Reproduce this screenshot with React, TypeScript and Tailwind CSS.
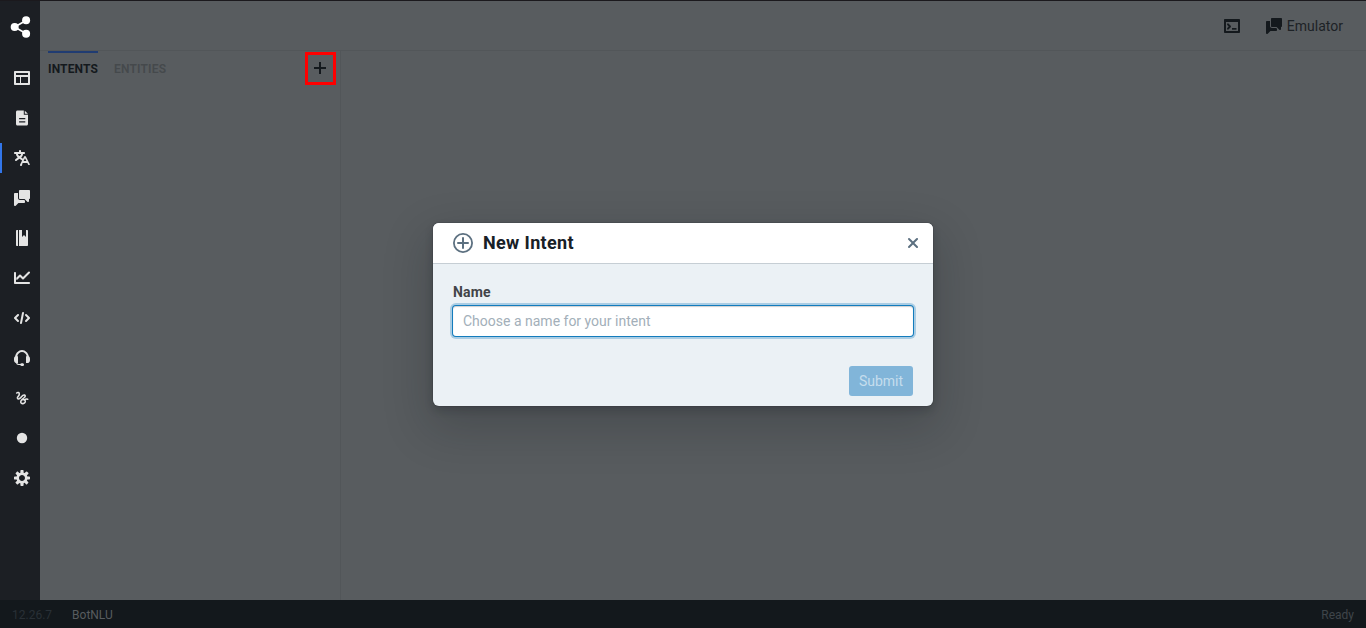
import React from "react";

type IconProps = { size?: number; className?: string; children: React.ReactNode };

function Icon({ size = 16, className = "", children }: IconProps) {
  return (
    <svg width={size} height={size} viewBox="0 0 16 16" fill="currentColor" className={`block shrink-0 ${className}`}>
      {children}
    </svg>
  );
}

const Chat = ({ className = "" }: { className?: string }) => (
  <Icon className={className}>
    <path d="M6 10c-1.1 0-2-.9-2-2V3H1c-.55 0-1 .45-1 1v11a1.003 1.003 0 001.71.71L4.41 13H10c.55 0 1-.45 1-1v-1.17l-.83-.83H6zm9-10H6c-.55 0-1 .45-1 1v7c0 .55.45 1 1 1h4.59l2.71 2.71c.17.18.42.29.7.29.55 0 1-.45 1-1V9c.55 0 1-.45 1-1V1c0-.55-.45-1-1-1z" />
  </Icon>
);

const navItems: { name: string; active?: boolean; icon: React.ReactNode }[] = [
  {
    name: "flows",
    icon: (
      <Icon>
        <path fillRule="evenodd" d="M1 1h14c.55 0 1 .45 1 1v12c0 .55-.45 1-1 1H1c-.55 0-1-.45-1-1V2c0-.55.45-1 1-1zm1 2v2h12V3H2zm0 4v6h4V7H2zm5 0v6h7V7H7z" />
      </Icon>
    ),
  },
  {
    name: "content",
    icon: (
      <Icon>
        <path transform="translate(0.5 0)" fillRule="evenodd" d="M3 .5h6.3v4.2h4.2V14c0 .9-.6 1.5-1.5 1.5H3c-.9 0-1.5-.6-1.5-1.5V2C1.500 1.100 2.100.5 3 .5zM10.300.7l3.100 3.100h-3.100V.7zM4.600 8v1.300h6.200V8H4.600zm0 3.200v1.300h6.200v-1.300H4.600z" />
      </Icon>
    ),
  },
  {
    name: "nlu",
    active: true,
    icon: (
      <Icon>
        <path d="M15.89 14.56l-3.99-8h-.01c-.17-.33-.5-.56-.89-.56s-.72.23-.89.56h-.01L9 8.760 7.170 7.380l.23-.18C8.370 6.470 9 5.310 9 4h1c.55 0 1-.45 1-1s-.45-1-1-1H7V1c0-.55-.45-1-1-1S5 .45 5 1v1H1c-.55 0-1 .45-1 1s.45 1 1 1h6c0 .66-.32 1.250-.82 1.610l-.68.51-.68-.5C4.320 5.250 4 4.660 4 4H2c0 1.310.63 2.470 1.600 3.200l.23.17L1.400 9.200l.01.01C1.170 9.400 1 9.670 1 10c0 .55.45 1 1 1 .23 0 .42-.09.59-.21l.01.01 2.900-2.170 2.600 1.950-1.990 3.980h.01c-.07.13-.12.27-.12.44 0 .55.45 1 1 1 .39 0 .72-.23.89-.56h.01L8.620 13h4.760l.72 1.450h.01c.17.32.5.55.89.55.55 0 1-.45 1-1 0-.16-.05-.31-.11-.44zM9.620 11L11 8.240 12.380 11H9.620z" />
      </Icon>
    ),
  },
  { name: "qna", icon: <Chat /> },
  {
    name: "library",
    icon: (
      <Icon>
        <path d="M2 1v14c0 .55.45 1 1 1h1V0H3c-.55 0-1 .45-1 1zm11-1h-1v7l-2-2-2 2V0H5v16h8c.55 0 1-.45 1-1V1c0-.55-.45-1-1-1z" />
      </Icon>
    ),
  },
  {
    name: "analytics",
    icon: (
      <Icon>
        <path d="M15 12H2V3c0-.55-.45-1-1-1s-1 .45-1 1v10c0 .55.45 1 1 1h14c.55 0 1-.45 1-1s-.45-1-1-1zM3.250 9.660L6 6.910l2.290 2.300a1.003 1.003 0 001.420 0l6-6a1.003 1.003 0 00-1.420-1.420L9 7.090 6.710 4.790a1.003 1.003 0 00-1.420 0L2.250 7.840v1.820h1z" />
      </Icon>
    ),
  },
  {
    name: "code",
    icon: (
      <Icon>
        <path d="M15.710 7.290l-3-3a1.003 1.003 0 00-1.420 1.420L13.590 8l-2.300 2.290a1.003 1.003 0 001.420 1.420l3-3c.18-.18.29-.43.29-.71s-.11-.53-.29-.71zM5 5a1.003 1.003 0 00-1.710-.71l-3 3C.11 7.470 0 7.720 0 8s.11.53.29.71l3 3a1.003 1.003 0 001.420-1.420L2.410 8l2.300-2.290C4.890 5.530 5 5.280 5 5zm4-3c-.48 0-.88.35-.97.81l-2 10c-.02.06-.03.12-.03.19 0 .55.45 1 1 1 .48 0 .88-.35.97-.81l2-10C9.990 3.130 10 3.070 10 3c0-.55-.45-1-1-1z" />
      </Icon>
    ),
  },
  {
    name: "hitl",
    icon: (
      <Icon>
        <path d="M14.850 6.340C14.180 3.010 11.480 0 8 0S1.820 3.010 1.150 6.340C.46 6.850 0 7.870 0 9v1c0 1.660.9 3 2 3h.05C2.300 14.140 3.180 15 4.500 15h1.750c.25.58.82 1 1.500 1h.75C9.330 16 10 15.500 10 14.700s-.67-1.400-1.500-1.400h-.75c-.7 0-1.260.2-1.500.6H4.800c-.75 0-1.230-.35-1.480-.95H4V6.200h-.8C3.800 3.900 5.700 2 8 2s4.200 1.900 4.800 4.200H12V13h2c1.100 0 2-1.340 2-3V9c0-1.130-.46-2.150-1.150-2.660z" />
      </Icon>
    ),
  },
  {
    name: "misunderstood",
    icon: (
      <Icon>
        <path
          d="M2.700 3C3.700 2.100 5.400 2.300 5.300 4.200 5.200 5.800 3.300 6.600 3.400 8c.2 1.400 1.800 1.200 3.300-.4C8.100 6 9.100 4.700 10.400 5.100c2 .8-.1 2.700-1.900 4-1.700 1.300-2.300 3-1.200 4 1.200 1 3.300.3 3.900-1.100.5-1.500-.9-2.800-2.500-2.400M10.600 9.800c1-.8 1.900-1 3.100-.6"
          fill="none"
          stroke="currentColor"
          strokeWidth="1.600"
          strokeLinecap="round"
        />
      </Icon>
    ),
  },
  {
    name: "testing",
    icon: (
      <Icon>
        <circle cx="8" cy="8" r="5.200" />
      </Icon>
    ),
  },
  {
    name: "settings",
    icon: (
      <Icon>
        <path d="M15.190 6.390h-1.850c-.11-.37-.27-.71-.45-1.040l1.360-1.360c.31-.31.31-.82 0-1.130l-1.130-1.130a.803.803 0 00-1.130 0l-1.360 1.360c-.33-.17-.67-.33-1.040-.44V.79c0-.44-.36-.8-.8-.8h-1.600c-.44 0-.8.36-.8.8v1.860c-.39.12-.75.28-1.100.47l-1.300-1.300c-.3-.3-.79-.3-1.090 0L1.820 2.910c-.3.3-.3.79 0 1.090l1.300 1.300c-.2.34-.36.7-.48 1.090H.79c-.44 0-.8.36-.8.8v1.600c0 .44.36.8.8.8h1.850c.11.37.27.71.45 1.040l-1.360 1.360c-.31.31-.31.82 0 1.130l1.130 1.130c.31.31.82.31 1.130 0l1.360-1.360c.33.18.67.33 1.040.44v1.860c0 .44.36.8.8.8h1.600c.44 0 .8-.36.8-.8v-1.860c.39-.12.75-.28 1.100-.47l1.300 1.300c.3.3.79.3 1.090 0l1.090-1.090c.3-.3.3-.79 0-1.090l-1.300-1.300c.19-.35.36-.71.48-1.100h1.850c.44 0 .8-.36.8-.8v-1.600a.816.816 0 00-.81-.79zm-7.200 4.600c-1.660 0-3-1.340-3-3s1.340-3 3-3 3 1.340 3 3-1.340 3-3 3z" />
      </Icon>
    ),
  },
];

function Sidebar() {
  return (
    <nav className="flex w-10 shrink-0 flex-col bg-[#1c1f24] text-[#e4e4e4]">
      <div className="flex h-[57px] items-start pl-[10px] pt-[15px]">
        <svg width="21" height="22" viewBox="0 0 21 22" className="block text-white" fill="currentColor">
          <path d="M16 4.400L4.600 11 16 17.600" fill="none" stroke="currentColor" strokeWidth="1.700" />
          <circle cx="4.700" cy="11" r="4" />
          <circle cx="16.100" cy="4.200" r="4" />
          <circle cx="16.100" cy="17.800" r="4" />
        </svg>
      </div>
      {navItems.map((item) => (
        <div key={item.name} className="flex h-10 items-center">
          <div
            className={`flex h-[30px] w-full items-center border-l-2 pl-3 ${
              item.active ? "border-[#3276ea]" : "border-transparent"
            }`}
          >
            {item.icon}
          </div>
        </div>
      ))}
    </nav>
  );
}

function Header() {
  return (
    <header className="flex h-[50px] shrink-0 items-center justify-end border-b border-[#525659] pr-[23px] text-[#14191d]">
      <Icon className="mr-[26px]">
        <path fillRule="evenodd" d="M1 1h14c.55 0 1 .45 1 1v12c0 .55-.45 1-1 1H1c-.55 0-1-.45-1-1V2c0-.55.45-1 1-1zm1 3v9h12V4H2z" />
        <path d="M4 6.300l2 2.200-2 2.200" fill="none" stroke="currentColor" strokeWidth="1.900" strokeLinecap="round" strokeLinejoin="round" />
        <path d="M8 10h4.500v1.700H8z" />
      </Icon>
      <Chat />
      <span className="ml-[5px] text-[14px] leading-[18px] text-[#1d2226]">Emulator</span>
    </header>
  );
}

function IntentPanel() {
  return (
    <aside className="flex w-[301px] shrink-0 items-start border-r border-[#525659] pl-2">
      <div className="w-[50px] whitespace-nowrap border-t-2 border-[#203c72] pt-[8px] text-[12px] font-bold leading-[16px] tracking-[0.14px] text-[#14191d]">
        INTENTS
      </div>
      <div className="ml-4 pt-[10px] text-[12px] font-semibold leading-[16px] tracking-[0.2px] text-[#45494c]">ENTITIES</div>
      <div className="ml-auto mr-[4px] mt-[1px] flex h-[33px] w-[31px] items-center justify-center border-3 border-[#fe0000] text-[#14191d]">
        <svg width="12" height="12" viewBox="0 0 12 12" className="mb-px mr-px block shrink-0">
          <path d="M6 0v12M0 6h12" stroke="currentColor" strokeWidth="2" />
        </svg>
      </div>
    </aside>
  );
}

function IntentDialog() {
  return (
    <section className="absolute left-[433px] top-[222px] flex h-[183px] w-[500px] flex-col overflow-visible rounded-[6px] bg-[#ebf1f5] shadow-[0_0_0_1px_rgba(16,22,26,0.1),0_4px_8px_rgba(16,22,26,0.2),0_18px_46px_6px_rgba(16,22,26,0.2)]">
      <div className="flex h-[41px] shrink-0 items-center rounded-t-[6px] border-b border-[#c6ced4] bg-white pl-5 pr-3">
        <svg width="20" height="20" viewBox="0 0 20 20" fill="none" stroke="#5c7080" className="mr-[10px] block">
          <circle cx="10" cy="10" r="9.100" strokeWidth="1.800" />
          <path d="M10 5v10M5 10h10" strokeWidth="2" strokeLinecap="round" />
        </svg>
        <h4 className="flex-1 pb-px text-[18px] font-bold leading-[20px] tracking-[0.35px] text-[#182026]">New Intent</h4>
        <Icon className="text-[#5c7080]">
          <path d="M9.410 8l3.290-3.290c.19-.18.3-.43.3-.71a1.003 1.003 0 00-1.710-.71L8 6.590l-3.290-3.300a1.003 1.003 0 00-1.420 1.420L6.590 8 3.300 11.290c-.19.18-.3.43-.3.71a1.003 1.003 0 001.710.71L8 9.410l3.290 3.290c.18.19.43.3.71.3a1.003 1.003 0 00.71-1.710L9.410 8z" />
        </Icon>
      </div>
      <div className="flex flex-col px-5 pt-[19px]">
        <label className="text-[14px] font-bold leading-[18px] tracking-[0.2px] text-[#424448]">Name</label>
        <input
          className="mt-[5px] h-[30px] w-full rounded-[3px] bg-white px-[10px] text-[14px] text-[#182026] shadow-[0_0_0_1px_#137cbd,0_0_0_3px_rgba(19,124,189,0.3),inset_0_1px_1px_rgba(16,22,26,0.2)] outline-none placeholder:text-[#a3afb9]"
          placeholder="Choose a name for your intent"
        />
        <button className="mt-[30px] h-[30px] w-16 self-end rounded-[3px] bg-[#81b5d9] text-[14px] text-[#c5dded]">Submit</button>
      </div>
    </section>
  );
}

export default function App() {
  return (
    <div className="relative flex h-[628px] w-[1366px] flex-col overflow-hidden border-t border-[#1b191d] bg-[#585c5f] font-['Roboto',sans-serif]">
      <div className="flex min-h-0 flex-1">
        <Sidebar />
        <main className="flex min-w-0 flex-1 flex-col">
          <Header />
          <div className="flex min-h-0 flex-1">
            <IntentPanel />
          </div>
        </main>
      </div>
      <footer className="flex h-7 shrink-0 items-center bg-[#13181c] px-3 pt-[2px] text-[12px] leading-[16px] text-[#3f454a]">
        <span className="text-[#293036]">12.26.7</span>
        <span className="ml-5 text-[#585c5f]">BotNLU</span>
        <span className="ml-auto">Ready</span>
      </footer>
      <IntentDialog />
    </div>
  );
}
